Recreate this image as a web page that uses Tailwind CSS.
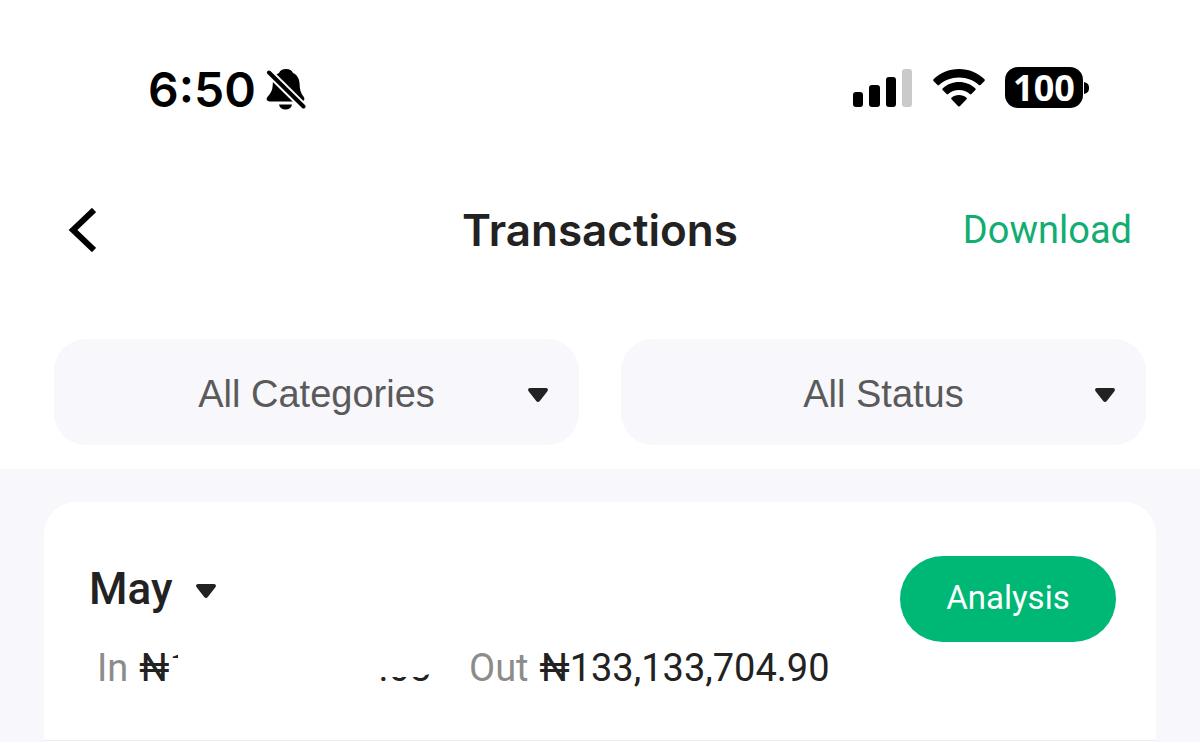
<!DOCTYPE html>
<html lang="en">
  <head>
    <meta charset="UTF-8" />
    <meta name="viewport" content="width=device-width, initial-scale=1.0" />
    <title>Transactions</title>
    <script src="https://cdn.jsdelivr.net/npm/@tailwindcss/browser@4"></script>
  </head>
  <body class="flex min-h-screen flex-col bg-[#f7f7fc] font-[Roboto,sans-serif] text-[#222222]">
    <div class="bg-white pb-6">
      <!--phone status bar-->
      <div class="flex items-start justify-between pt-15 pr-[110px] pl-[148px] text-black">
        <div class="flex items-center gap-[10px]">
          <span class="font-[Inter,sans-serif] text-[48px] leading-[60px] font-semibold">6:50</span>
          <svg class="h-[42px] w-10" viewBox="0 0 40 42" aria-label="Silent">
            <path d="M20 0c-3.500 0-6 1.500-7 4C9 6 7 10 6.800 15c-.2 6-1.800 9-5 12.500C-.4 30 .6 32.500 4 32.500h31c3.200 0 4.400-2.500 2.500-5-2.600-3.500-3.700-6.500-3.900-12.500-.2-5-2.200-9-6.600-11C26 1.500 23.500 0 20 0z" />
            <path d="M13 35.500h13c-.6 3.200-3 5-6.500 5s-5.900-1.800-6.500-5z" />
            <path d="M1 1.500l39.500 39" stroke="#fff" stroke-width="8" />
            <path d="M3 3.500l34.500 34" stroke="#000" stroke-width="4" stroke-linecap="round" />
          </svg>
        </div>
        <div class="flex items-center gap-5 pt-[7px]">
          <svg class="h-[38px] w-[60px]" viewBox="0 0 60 38" aria-label="Signal">
            <rect x="0" y="23" width="10" height="15" rx="3" />
            <rect x="16" y="16" width="11" height="22" rx="3" />
            <rect x="33" y="8" width="10" height="30" rx="3" />
            <rect x="49" y="0" width="10" height="38" rx="3" fill="#cacaca" />
          </svg>
          <svg class="h-[38px] w-[52px]" viewBox="0 0 52 38" aria-label="Wi-Fi">
            <path d="M26 0C16 0 7 3.900.5 10.300c-.5.500-.5 1.100 0 1.600l4 4c.5.500 1.100.5 1.600 0C11.400 11.300 18 8.500 26 8.500s14.600 2.800 19.900 7.400c.5.500 1.100.5 1.600 0l4-4c.5-.5.500-1.100 0-1.600C45 3.900 36 0 26 0z" />
            <path d="M26 13c-6.300 0-12 2.400-16.400 6.400-.5.500-.5 1.100 0 1.600l4 4c.5.500 1.100.5 1.600 0C18.300 22.600 21.700 21 26 21s7.700 1.600 10.800 4c.5.500 1.100.5 1.600 0l4-4c.5-.5.500-1.100 0-1.600C38 15.400 32.300 13 26 13z" />
            <path d="M26 26c-2.900 0-5.500 1-7.500 2.700-.5.500-.5 1 0 1.500l6.700 7c.5.500 1.100.5 1.600 0l6.700-7c.5-.5.500-1 0-1.500C31.500 27 28.900 26 26 26z" />
          </svg>
          <div class="flex items-center gap-px">
            <span class="h-[41px] w-[78px] rounded-[13px] bg-black text-center font-['Noto_Sans',sans-serif] text-[36px] leading-[41px] font-bold text-white">100</span>
            <svg class="h-3 w-[6px]" viewBox="0 0 6 12"><path d="M0 0c4 1 5 3 5 6s-1 5-5 6z" /></svg>
          </div>
        </div>
      </div>

      <!--page header-->
      <header class="mt-20 grid grid-cols-[1fr_auto_1fr] items-center px-[68px]">
        <button type="button" aria-label="Back">
          <svg class="h-11 w-7" viewBox="0 0 28 44" fill="none" stroke="#000" stroke-width="6">
            <path d="M26 2L5 22l21 20" />
          </svg>
        </button>
        <h1 class="font-[Inter,sans-serif] text-[44px] leading-[60px] font-semibold">Transactions</h1>
        <a href="#" class="justify-self-end text-[38px] leading-[56px] text-[#12ad72]">Download</a>
      </header>

      <!--filters-->
      <form class="mt-[79px] grid grid-cols-2 gap-[42px] px-[54px] font-['Liberation_Sans',sans-serif] text-[38px] text-[#5a5a5a]">
        <div class="grid items-center">
          <select aria-label="Category" class="col-start-1 row-start-1 h-[106px] w-full appearance-none rounded-[32px] bg-[#f7f7fc] pt-1 text-center">
            <option>All Categories</option>
          </select>
          <svg class="pointer-events-none col-start-1 row-start-1 mt-[6px] mr-[31px] h-[14px] w-5 justify-self-end" viewBox="0 0 20 14" fill="#222222">
            <path d="M2 0h16c1.700 0 2.500 1.800 1.400 3.200l-7.600 9.800c-1 1.200-2.600 1.200-3.600 0L.6 3.200C-.5 1.800.3 0 2 0z" />
          </svg>
        </div>
        <div class="grid items-center">
          <select aria-label="Status" class="col-start-1 row-start-1 h-[106px] w-full appearance-none rounded-[32px] bg-[#f7f7fc] pt-1 text-center">
            <option>All Status</option>
          </select>
          <svg class="pointer-events-none col-start-1 row-start-1 mt-[6px] mr-[31px] h-[14px] w-5 justify-self-end" viewBox="0 0 20 14" fill="#222222">
            <path d="M2 0h16c1.700 0 2.500 1.800 1.400 3.200l-7.600 9.800c-1 1.200-2.600 1.200-3.600 0L.6 3.200C-.5 1.800.3 0 2 0z" />
          </svg>
        </div>
      </form>
    </div>

    <!--month summary-->
    <main class="mx-11 mt-[33px] flex-1 rounded-t-[32px] bg-white">
      <section class="border-b border-[#ececec] pb-[46px]">
        <div class="flex h-[140px] items-start justify-between pt-[54px] pr-10 pl-[45px]">
          <button type="button" class="mt-[7px] flex items-center gap-6 text-[44px] leading-[52px] font-medium">
            May
            <svg class="mt-1 h-[14px] w-5" viewBox="0 0 20 14" fill="#222222">
              <path d="M2 0h16c1.700 0 2.500 1.800 1.400 3.200l-7.600 9.800c-1 1.200-2.600 1.200-3.600 0L.6 3.200C-.5 1.800.3 0 2 0z" />
            </svg>
          </button>
          <button type="button" class="h-[86px] w-[216px] rounded-full bg-[#00b875] pb-[2px] text-[33px] text-white">Analysis</button>
        </div>
        <div class="flex items-center pl-[53px] text-[38px] leading-[52px]">
          <p class="flex w-[372px] gap-[11px] whitespace-nowrap">
            <span class="text-[#8c8c8c]">In</span>
            <!--amount received, mostly covered-->
            <span class="relative flex w-[292px] justify-between">
              <span>₦1</span>
              <span>.03</span>
              <svg class="absolute inset-0 h-full w-full" viewBox="0 0 292 52" preserveAspectRatio="none" fill="#fff">
                <path d="M30 16H39V0h255v31L280 35H238v17H30z" />
              </svg>
            </span>
          </p>
          <p class="flex gap-[11px] whitespace-nowrap">
            <span class="text-[#8c8c8c]">Out</span>
            <span>₦133,133,704.90</span>
          </p>
        </div>
      </section>
    </main>
  </body>
</html>
